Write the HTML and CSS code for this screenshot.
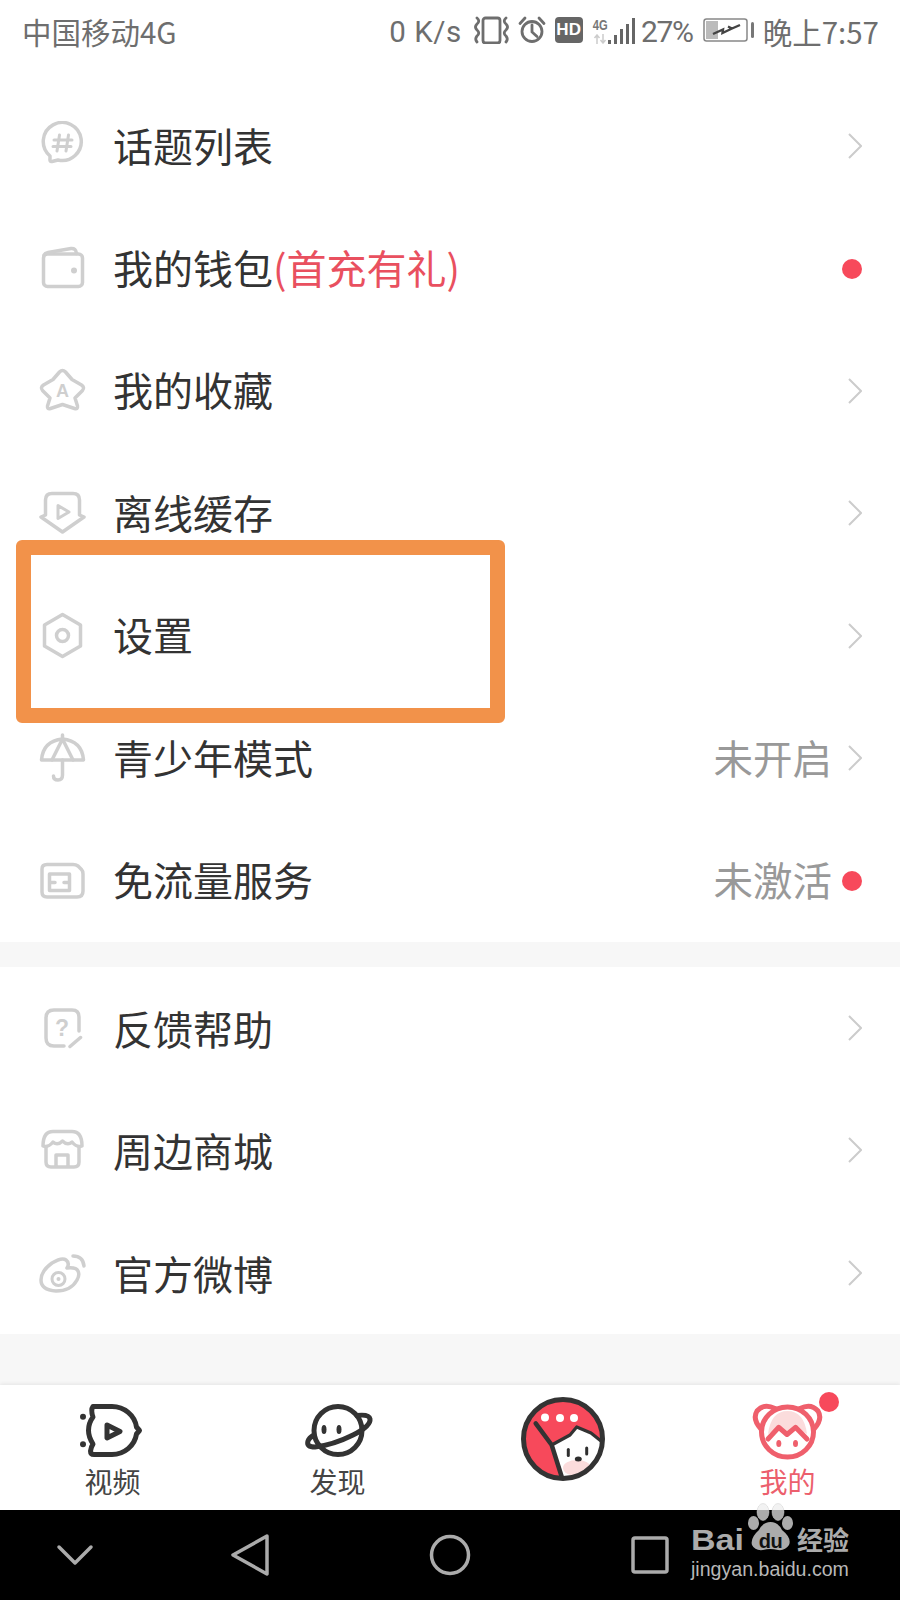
FILE: index.html
```html
<!DOCTYPE html>
<html lang="zh-CN">
<head>
<meta charset="utf-8">
<title>我的</title>
<link rel="stylesheet" href="styles.css">
</head>
<body>
<div class="page">
  <header class="status">
    <span class="carrier">中国移动4G</span>
    <div class="status-right">
      <span class="speed">0 K/s</span>
      <svg class="st vib" viewBox="0 0 35 28" width="35" height="28"><rect x="9" y="2" width="17" height="25" rx="2.500"/><path d="M3 2 Q6.500 5 3 8 Q0 11 3 14 Q6.500 17 3 20 Q0.500 23 3 26M32 2 Q28.500 5 32 8 Q35 11 32 14 Q28.500 17 32 20 Q34.500 23 32 26"/></svg>
      <svg class="st alarm" viewBox="0 0 28 28" width="28" height="28"><circle cx="14" cy="15.500" r="10"/><path d="M14 9 V16 L19 20.500M2 7.500 L7 2M26 7.500 L21 2"/></svg>
      <span class="hd">HD</span>
      <div class="net">
        <div class="net-tag"><span class="net-4g">4G</span><svg viewBox="0 0 14 10" width="14" height="10"><path d="M4 10 V1 M1.500 4 L4 1 L6.500 4 M10 0 V9 M7.500 6 L10 9 L12.500 6"/></svg></div>
        <div class="bars"><i class="b1"></i><i class="b2"></i><i class="b3"></i><i class="b4"></i><i class="b5"></i></div>
      </div>
      <span class="pct">27%</span>
      <svg class="batt" viewBox="0 0 51 24" width="51" height="24"><rect class="bo" x="1" y="1" width="43" height="22" rx="2.500"/><rect class="bl" x="3" y="3" width="12" height="18"/><path class="bz" d="M10 16 L20 11.500 L19.500 15 L29 10.500 M25 8.500 L29 10.500 L37 7"/><rect class="bt" x="48" y="4" width="3" height="16" rx="1.500"/></svg>
      <span class="clock">晚上7:57</span>
    </div>
  </header>

  <main>
    <section class="group">
      <div class="row">
        <svg class="ico" viewBox="0 0 50 50"><path d="M12 35 A19 19 0 1 1 20 39 L14 40.500 Q11.500 41 12 37.500 Z"/><path class="thin" d="M21.500 14 L19 30M30.500 14 L28 30M16 19 H34M15 25.500 H33"/></svg>
        <span class="label">话题列表</span>
        <span class="trail"><svg class="chev" viewBox="0 0 14 26"><path d="M1 1 L13 13 L1 25"/></svg></span>
      </div>
      <div class="row">
        <svg class="ico" viewBox="0 0 50 50"><rect x="5.500" y="10" width="39" height="32.500" rx="4"/><path d="M6 11 Q7 9 10 8.500 L33 4.500 Q38 4 38.500 9.500"/><circle class="fill" cx="36" cy="26.500" r="3"/></svg>
        <span class="label">我的钱包<em class="promo">(首充有礼)</em></span>
        <span class="trail"><i class="dot"></i></span>
      </div>
      <div class="row">
        <svg class="ico" viewBox="0 0 50 50"><path d="M21.500 6 Q24.500 3 27.500 6 L34 13.500 L43.500 19 Q47 21.500 44.500 24.500 L37 32 L39.500 40 Q40 43.500 36.500 42.500 L24.500 38.500 L12.500 42.500 Q9 43.500 9.500 40 L12 32 L4.500 24.500 Q2 21.500 5.500 19 L15 13.500 Z"/><text class="ico-letter" x="24.500" y="31">A</text></svg>
        <span class="label">我的收藏</span>
        <span class="trail"><svg class="chev" viewBox="0 0 14 26"><path d="M1 1 L13 13 L1 25"/></svg></span>
      </div>
      <div class="row">
        <svg class="ico" viewBox="0 0 50 50"><path d="M7.500 27 V12 Q7.500 5.500 14 5.500 H35 Q41.500 5.500 41.500 12 V27 L46 29 L24.500 44 L3 29 Z"/><path class="thin" d="M20 17.500 L31 24 L20 30.500 Z"/></svg>
        <span class="label">离线缓存</span>
        <span class="trail"><svg class="chev" viewBox="0 0 14 26"><path d="M1 1 L13 13 L1 25"/></svg></span>
      </div>
      <div class="row">
        <svg class="ico" viewBox="0 0 50 50"><path d="M24.500 3.500 L42.500 14 V35 L24.500 45.500 L6.500 35 V14 Z"/><circle cx="24.500" cy="24.500" r="6"/></svg>
        <span class="label">设置</span>
        <span class="trail"><svg class="chev" viewBox="0 0 14 26"><path d="M1 1 L13 13 L1 25"/></svg></span>
      </div>
      <div class="row">
        <svg class="ico" viewBox="0 0 50 50"><path d="M3.500 27 Q5 8 24.500 6 Q44 8 45.500 27 Z"/><path d="M24.500 6 L14 27M24.500 6 L35 27M24.500 2 V6M24.500 27 V42 Q24.500 47 20 47 Q15.500 47 15.500 43"/></svg>
        <span class="label">青少年模式</span>
        <span class="trail-text">未开启</span>
        <span class="trail"><svg class="chev" viewBox="0 0 14 26"><path d="M1 1 L13 13 L1 25"/></svg></span>
      </div>
      <div class="row">
        <svg class="ico" viewBox="0 0 50 50"><path d="M9 8.500 H35 Q38 8.500 40 10 L43.500 13.500 Q45 15 45 18 V35 Q45 41 39 41 H9 Q4 41 4 36 V13 Q4 8.500 9 8.500 Z"/><path d="M11.500 18 H31.500 V34.500 H11.500 Z M11.500 26.500 H17 M31.500 26.500 H26"/></svg>
        <span class="label">免流量服务</span>
        <span class="trail-text">未激活</span>
        <span class="trail"><i class="dot"></i></span>
      </div>
    </section>

    <section class="group second">
      <div class="row">
        <svg class="ico" viewBox="0 0 50 50"><path d="M41 28 V14 Q41 7 34 7 H16 Q8 7 8 15 V35 Q8 43 16 43 H26M32 43.500 L42.500 34.500"/><text class="ico-letter q" x="24" y="33">?</text></svg>
        <span class="label">反馈帮助</span>
        <span class="trail"><svg class="chev" viewBox="0 0 14 26"><path d="M1 1 L13 13 L1 25"/></svg></span>
      </div>
      <div class="row">
        <svg class="ico" viewBox="0 0 50 50"><path d="M5 21 Q5 6.500 15 6.500 H34 Q44 6.500 44 21 Q39 23 34 17 Q29.500 21 24.500 16 Q19.500 21 15 17 Q10 23 5 21 Z"/><path d="M8 22 V37 Q8 42 13 42 H36 Q41 42 41 37 V22M18 42 V30 H30 V42"/></svg>
        <span class="label">周边商城</span>
        <span class="trail"><svg class="chev" viewBox="0 0 14 26"><path d="M1 1 L13 13 L1 25"/></svg></span>
      </div>
      <div class="row">
        <svg class="ico" viewBox="0 0 50 50"><path d="M3 32 Q3 23 14 15 Q24 9 28 12 Q32 15 29 20 Q38 19 40 23 Q42 27 39 32 Q33 43 18 43 Q3 42 3 32 Z"/><circle class="thin" cx="20.500" cy="31" r="6.500"/><circle class="fill" cx="20.500" cy="31" r="2"/><path d="M35 8 Q45 8 46 18"/></svg>
        <span class="label">官方微博</span>
        <span class="trail"><svg class="chev" viewBox="0 0 14 26"><path d="M1 1 L13 13 L1 25"/></svg></span>
      </div>
    </section>
  </main>

  <nav class="tabs">
    <div class="tab">
      <svg class="tab-ico" viewBox="0 0 70 56"><path d="M15 4.500 H34 A25 24 0 0 1 58.500 25 L61.500 28.500 L58.500 32 A25 24 0 0 1 34 52.500 H16 Q12.500 52.500 12.500 49 Q13 45 15 42 Q10.500 35 10.500 28.500 Q10.500 21 15 15 Q12.500 8 15 4.500 Z"/><path d="M29 23 L42 29.500 L29 36 Z"/><circle class="tab-fill" cx="5" cy="14.700" r="3"/><circle class="tab-fill" cx="5" cy="42.300" r="3"/></svg>
      <span class="tab-label">视频</span>
    </div>
    <div class="tab">
      <svg class="tab-ico" viewBox="0 0 70 56"><circle cx="35" cy="28.500" r="24"/><path d="M54 13.500 Q66 12 67 17 Q68 24 50 33 Q30 43 12 45 Q3 45 5 39 Q6 36 11 33"/><ellipse class="tab-fill" cx="21" cy="27.500" rx="2.500" ry="4.500"/><ellipse class="tab-fill" cx="36" cy="27.500" rx="2.500" ry="4.500"/></svg>
      <span class="tab-label">发现</span>
    </div>
    <div class="tab center">
      <svg class="avatar" viewBox="0 0 84 84">
        <circle class="av-red" cx="42" cy="42" r="39"/>
        <path class="av-white" d="M30.700 48 L49 38 L55.700 30 L70 36 L81 46 A39 39 0 0 1 41 81 Z"/>
        <ellipse class="av-pink" cx="56" cy="71" rx="14" ry="8"/>
        <path class="av-line" d="M14.700 26.300 L30.700 48 L40.700 79.700"/>
        <path class="av-thin" d="M30.700 48 L49 38 L55.700 30 L70 36 L80 44"/>
        <circle class="av-w" cx="24" cy="20.500" r="4"/><circle class="av-w" cx="39" cy="21" r="4"/><circle class="av-w" cx="53" cy="21" r="4"/>
        <rect class="av-k" x="45.800" y="51" width="3" height="9" rx="1.500"/><rect class="av-k" x="64.200" y="49.500" width="3" height="9" rx="1.500"/>
        <ellipse class="av-k" cx="57.300" cy="62" rx="3.500" ry="2.500"/>
        <circle class="av-ring" cx="42" cy="42" r="39.500"/>
      </svg>
    </div>
    <div class="tab mine">
      <span class="tab-badge"></span>
      <svg class="tab-ico pinkico" viewBox="0 0 70 56"><path class="hair" d="M15 32 Q18 9 34.500 9 Q51 9 54 32 L42.500 25 L34 32 L25.800 25 Z"/><ellipse cx="34.500" cy="30" rx="26" ry="25"/><path d="M8 27 Q-1 17 4 9 Q11 1 22 6.500M61 27 Q70 17 65 9 Q58 1 47 6.500"/><path d="M15 37 L25.800 25.300 L34 32.500 L42.500 25.300 L54 37"/><ellipse class="tab-fill" cx="25.800" cy="41.500" rx="2.500" ry="3.500"/><ellipse class="tab-fill" cx="42.500" cy="41.500" rx="2.500" ry="3.500"/></svg>
      <span class="tab-label on">我的</span>
    </div>
  </nav>

  <footer class="sysnav">
    <svg class="navi" viewBox="0 0 50 50"><path d="M9 17 L25 33 L41 17"/></svg>
    <svg class="navi" viewBox="0 0 50 50"><path d="M42 6 L8 25 L42 44 Z"/></svg>
    <svg class="navi" viewBox="0 0 50 50"><circle cx="25" cy="25" r="18.500"/></svg>
    <svg class="navi" viewBox="0 0 50 50"><rect x="8" y="8" width="34" height="34" rx="2"/></svg>
  </footer>

  <div class="highlight"></div>

  <div class="mark">
    <div class="mark-top">
      <span class="mark-bai">Bai</span>
      <span class="mark-paw">
        <svg viewBox="0 0 48 48" width="48" height="48"><defs><linearGradient id="toeFill" gradientUnits="userSpaceOnUse" x1="0" y1="0" x2="0" y2="18"><stop offset="0" stop-color="#f2f2f2"/><stop offset=".39" stop-color="#f2f2f2"/><stop offset=".39" stop-color="#ababab"/><stop offset="1" stop-color="#ababab"/></linearGradient></defs><ellipse class="toe" cx="15" cy="9" rx="6" ry="8.500"/><ellipse class="toe" cx="30" cy="9" rx="6" ry="8.500"/><ellipse class="pawc" cx="5.500" cy="20" rx="5.500" ry="7"/><ellipse class="pawc" cx="39.500" cy="20" rx="5.500" ry="7"/><path class="pawc" d="M22.500 19 Q30 19 34 27 Q44 35 41 42 Q37 48 30 47 Q22 45 15 47 Q7 48 4 42 Q2 35 11 27 Q15 19 22.500 19 Z"/></svg>
        <span class="mark-du">du</span>
      </span>
      <span class="mark-cn">经验</span>
    </div>
    <div class="mark-url">jingyan.baidu.com</div>
  </div>
</div>
</body>
</html>
```
FILE: styles.css
```css
* { box-sizing: border-box; }
html, body { margin: 0; padding: 0; }
body {
  font-family: "Noto Sans CJK SC", "Noto Sans", sans-serif;
  background: #f7f7f7;
}
.page {
  position: relative;
  width: 900px;
  height: 1600px;
  overflow: hidden;
  display: flex;
  flex-direction: column;
  background: #f7f7f7;
}

/* status bar */
.status {
  height: 85px;
  flex: none;
  background: #fff;
  display: flex;
  justify-content: space-between;
  align-items: flex-start;
  padding: 13px 21px 0 22px;
  color: #6e6e6e;
  font-size: 29.500px;
  line-height: 36px;
}
.status-right { display: flex; align-items: center; height: 36px; }
.speed { font-family: Roboto, sans-serif; font-size: 29.500px; margin-right: 12px; letter-spacing: .5px; padding-top: 2px; }
.st { fill: none; stroke: #6e6e6e; stroke-width: 2.800; flex: none; margin-bottom: 2px; stroke-linecap: round; }
.st.vib { margin-right: 9px; }
.st.alarm { margin-right: 9px; }
.hd {
  width: 28px; height: 26px; border-radius: 4px;
  background: #666; color: #fff;
  font: 700 17px/26px "Liberation Sans", sans-serif;
  text-align: center; margin-right: 10px; margin-bottom: 2px;
}
.net { display: flex; align-items: flex-end; height: 27px; margin-right: 6px; margin-bottom: 2px; }
.net-tag { display: flex; flex-direction: column; width: 15px; align-items: center; }
.net-4g { font: 700 14px/17px "Liberation Sans Narrow", "Liberation Sans", sans-serif; color: #777; transform: scaleX(.8); }
.net-tag svg { fill: none; stroke: #ccc; stroke-width: 1.500; }
.bars { display: flex; align-items: flex-end; gap: 2.700px; margin-left: 0; }
.bars i { display: block; width: 3.300px; background: #666; }
.bars .b1 { height: 3.500px; } .bars .b2 { height: 9px; } .bars .b3 { height: 14.500px; } .bars .b4 { height: 20px; } .bars .b5 { height: 26px; }
.pct { font-family: Roboto, sans-serif; font-size: 30px; letter-spacing: -1.300px; margin-right: 10px; padding-top: 2px; }
.batt { flex: none; margin-right: 9px; margin-bottom: 2px; }
.batt .bo { fill: #fff; stroke: #888; stroke-width: 1.500; }
.batt .bl { fill: #bbb; }
.batt .bz { fill: none; stroke: #444; stroke-width: 2.400; stroke-linejoin: miter; }
.batt .bt { fill: #777; }
.clock { font-size: 29.500px; }

/* list */
main { flex: 1; display: flex; flex-direction: column; gap: 25px; }
.group { background: #fff; }
.row {
  height: 122.400px;
  display: flex;
  align-items: center;
  padding: 0 38px 0 38px;
}
.ico {
  width: 50px; height: 50px; flex: none; margin-right: 25px;
  fill: none; stroke: #cfcfcf; stroke-width: 3.500;
  stroke-linejoin: round; stroke-linecap: round;
}
.ico .thin { stroke-width: 3; }
.ico .fill { fill: #cfcfcf; stroke: none; }
.ico-letter {
  fill: #cfcfcf; stroke: none; text-anchor: middle;
  font: 700 18px "Liberation Sans", sans-serif;
}
.ico-letter.q { font-size: 23px; }
.label { flex: 1; font-size: 40px; line-height: 50px; padding-bottom: 3px; color: #333; white-space: nowrap; }
.second .label { padding-bottom: 0; }
.promo { font-style: normal; color: #e9505f; }
.trail-text { font-size: 39.500px; line-height: 50px; padding-bottom: 3px; color: #999; margin-right: 10px; }
.trail { width: 20px; flex: none; display: flex; justify-content: flex-end; align-items: center; }
.chev { width: 14px; height: 26px; fill: none; stroke: #cccccc; stroke-width: 2; }
.dot { display: block; width: 20px; height: 20px; border-radius: 50%; background: #f7495b; }

/* highlight */
.highlight {
  position: absolute; left: 16px; top: 540px;
  width: 489px; height: 183px;
  border: 15px solid #f2924a; border-radius: 6px;
}

/* tabs */
.tabs {
  flex: none; height: 125px; background: #fff;
  display: grid; grid-template-columns: repeat(4, 225px);
  box-shadow: 0 -1px 4px rgba(0,0,0,.08);
  position: relative;
}
.tab {
  position: relative;
  display: flex; flex-direction: column; align-items: center;
  padding-top: 17px;
}
.tab.center { padding-top: 12px; }
.tab-ico {
  width: 70px; height: 56px; flex: none;
  fill: none; stroke: #333; stroke-width: 5;
  stroke-linejoin: round; stroke-linecap: round;
  overflow: visible;
}
.tab-ico .tab-fill { fill: #333; stroke: none; }
.pinkico { stroke: #ef5f6c; }
.pinkico .tab-fill { fill: #ef5f6c; }
.pinkico .hair { fill: #fbdcdc; stroke: none; }
.tab-label { font-size: 28px; line-height: 38px; color: #444; margin-top: 4px; }
.tab-label.on { color: #ec5f6d; }
.tab-badge {
  position: absolute; left: 144px; top: 7px;
  width: 20px; height: 20px; border-radius: 50%; background: #f7495b;
}
.avatar { width: 84px; height: 84px; display: block; }
.av-red { fill: #f7495b; }
.av-white { fill: #fff; }
.av-line { fill: none; stroke: #333; stroke-width: 4.500; stroke-linejoin: round; stroke-linecap: round; }
.av-thin { fill: none; stroke: #333; stroke-width: 3.200; stroke-linejoin: round; stroke-linecap: round; }
.av-pink { fill: #fbdcdc; }
.av-w { fill: #fff; }
.av-k { fill: #2f2f2f; }
.av-ring { fill: none; stroke: #333; stroke-width: 5; }

/* system nav */
.sysnav {
  flex: none; height: 90px; background: #000;
  display: grid; grid-template-columns: 150px 200px 200px 200px;
  justify-items: center; align-items: center;
}
.navi {
  width: 50px; height: 50px;
  fill: none; stroke: #ababab; stroke-width: 3.500;
  stroke-linejoin: round; stroke-linecap: round;
}

/* watermark */
.mark { position: absolute; left: 691px; top: 1503px; width: 165px; color: #ababab; }
.mark-top { display: flex; align-items: flex-end; height: 48px; }
.mark-bai {
  font: 700 34px/30px "Liberation Sans", sans-serif;
  width: 57px; margin-bottom: -3px;
  transform: scaleY(.88);
}
.mark-paw { position: relative; width: 48px; height: 48px; flex: none; }
.mark-paw svg { display: block; }
.mark-paw .pawc { fill: #ababab; }
.mark-paw .toe { fill: url(#toeFill); stroke: #d0d0d0; stroke-width: .5; }
.mark-du {
  position: absolute; left: 0; right: 3px; bottom: 0; text-align: center;
  font: 700 20px/20px "Liberation Sans", sans-serif; color: #111; letter-spacing: -.5px;
}
.mark-cn { font-size: 26px; font-weight: 700; line-height: 30px; margin-left: 1px; margin-bottom: -3px; white-space: nowrap; }
.mark-url { font: 400 19.600px/24px "Liberation Sans", sans-serif; color: #b8b8b8; margin-top: 6px; white-space: nowrap; }
```
